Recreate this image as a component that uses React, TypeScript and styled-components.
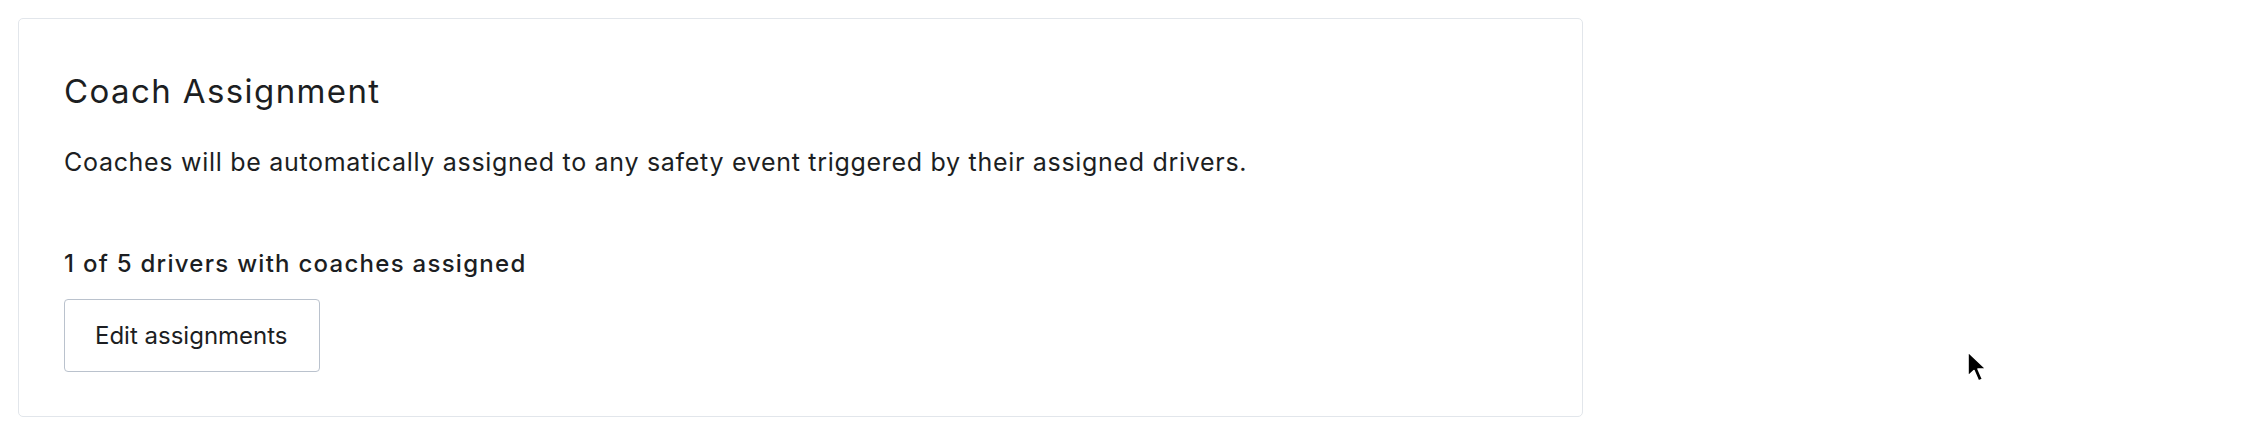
import React from "react";
import styled, { createGlobalStyle } from "styled-components";

const GlobalStyle = createGlobalStyle`
  html, body {
    margin: 0;
    padding: 0;
    background: #ffffff;
    font-family: Inter, "Liberation Sans", sans-serif;
    color: #1c1e22;
  }
  * { box-sizing: border-box; }
`;

const Page = styled.div`
  position: relative;
  width: 2246px;
  height: 436px;
  padding: 18px;
`;

const Card = styled.section`
  width: 1565px;
  height: 399px;
  border: 1.5px solid #e2e6eb;
  border-radius: 5px;
  padding: 52px 44px 0 45px;
  display: flex;
  flex-direction: column;
  align-items: flex-start;
`;

const Title = styled.h2`
  margin: 0;
  font-size: 33px;
  line-height: 40px;
  font-weight: 400;
  letter-spacing: 1.4px;
`;

const Description = styled.p`
  margin: 33px 0 0;
  font-size: 25px;
  line-height: 36px;
  font-weight: 400;
  letter-spacing: 0.7px;
`;

const Summary = styled.div`
  margin-top: 68px;
  font-size: 24px;
  line-height: 32px;
  font-weight: 500;
  letter-spacing: 1.27px;
`;

const Button = styled.button`
  margin-top: 19px;
  width: 256px;
  height: 73px;
  padding: 0 30px;
  border: 1.5px solid #bac2cd;
  border-radius: 4px;
  background: #ffffff;
  font-family: inherit;
  font-size: 24px;
  line-height: 32px;
  color: #1c1e22;
  text-align: left;
  cursor: pointer;
`;

const Cursor = styled.svg`
  position: absolute;
  left: 1965px;
  top: 350px;
  width: 26px;
  height: 36px;
  pointer-events: none;
`;

export default function App() {
  return (
    <>
      <GlobalStyle />
      <Page>
        <Card>
          <Title>Coach Assignment</Title>
          <Description>
            Coaches will be automatically assigned to any safety event triggered by their assigned drivers.
          </Description>
          <Summary>1 of 5 drivers with coaches assigned</Summary>
          <Button>Edit assignments</Button>
        </Card>
        <Cursor viewBox="0 0 26 36">
          <path
            d="M3 2 L3 26 L9 20.5 L13.5 31 L17.5 29.3 L13 19 L21 19 Z"
            fill="#000"
            stroke="#fff"
            strokeWidth="1.6"
            strokeLinejoin="round"
          />
        </Cursor>
      </Page>
    </>
  );
}
